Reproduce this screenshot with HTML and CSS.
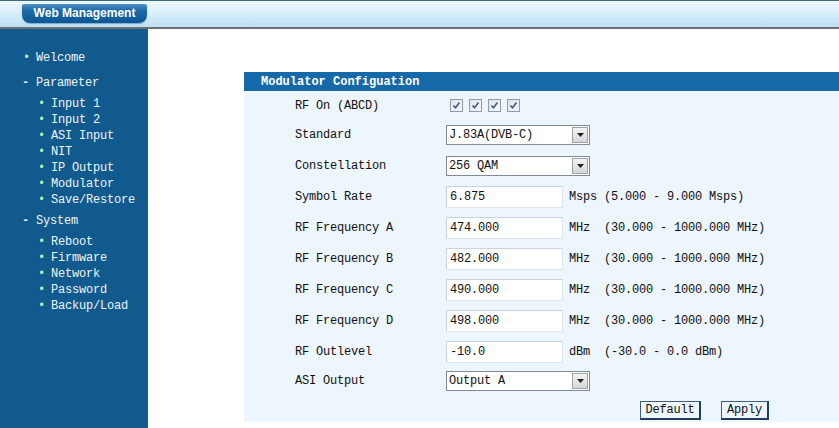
FILE: index.html
```html
<!DOCTYPE html>
<html lang="en">

<head>
  <meta charset="UTF-8" />
  <title>Web Management</title>
  <link rel="stylesheet" href="styles.css">
</head>

<body>

  <div class="header">
    <div class="tab">Web Management</div>
  </div>

  <div class="page">
    <div class="sidebar">
      <ul class="menu">
        <li class="item"><span class="dot">&bull;</span>Welcome</li>
        <li class="group"><span class="dash">-</span>Parameter
          <ul class="sub">
            <li><span class="dot">&bull;</span>Input 1</li>
            <li><span class="dot">&bull;</span>Input 2</li>
            <li><span class="dot">&bull;</span>ASI Input</li>
            <li><span class="dot">&bull;</span>NIT</li>
            <li><span class="dot">&bull;</span>IP Output</li>
            <li><span class="dot">&bull;</span>Modulator</li>
            <li><span class="dot">&bull;</span>Save/Restore</li>
          </ul>
        </li>
        <li class="group"><span class="dash">-</span>System
          <ul class="sub">
            <li><span class="dot">&bull;</span>Reboot</li>
            <li><span class="dot">&bull;</span>Firmware</li>
            <li><span class="dot">&bull;</span>Network</li>
            <li><span class="dot">&bull;</span>Password</li>
            <li><span class="dot">&bull;</span>Backup/Load</li>
          </ul>
        </li>
      </ul>
    </div>

    <div class="content">
      <div class="panel">
        <div class="panel-title">Modulator Configuation</div>

        <div class="row first">
          <div class="label">RF On (ABCD)</div>
          <div class="field checks">
            <span class="check"><svg width="9" height="9" viewBox="0 0 9 9"><path d="M1.5 4.5 L3.5 6.8 L7.5 1.5" fill="none" stroke="#3f5c8c" stroke-width="1.6"/></svg></span>
            <span class="check"><svg width="9" height="9" viewBox="0 0 9 9"><path d="M1.5 4.5 L3.5 6.8 L7.5 1.5" fill="none" stroke="#3f5c8c" stroke-width="1.6"/></svg></span>
            <span class="check"><svg width="9" height="9" viewBox="0 0 9 9"><path d="M1.5 4.5 L3.5 6.8 L7.5 1.5" fill="none" stroke="#3f5c8c" stroke-width="1.6"/></svg></span>
            <span class="check"><svg width="9" height="9" viewBox="0 0 9 9"><path d="M1.5 4.5 L3.5 6.8 L7.5 1.5" fill="none" stroke="#3f5c8c" stroke-width="1.6"/></svg></span>
          </div>
        </div>

        <div class="row">
          <div class="label">Standard</div>
          <div class="field">
            <div class="select"><span class="value">J.83A(DVB-C)</span><span class="arrow"><svg width="7" height="4" viewBox="0 0 7 4"><path d="M0 0 H7 L3.5 4 Z" fill="#222"/></svg></span></div>
          </div>
        </div>

        <div class="row">
          <div class="label">Constellation</div>
          <div class="field">
            <div class="select"><span class="value">256 QAM</span><span class="arrow"><svg width="7" height="4" viewBox="0 0 7 4"><path d="M0 0 H7 L3.5 4 Z" fill="#222"/></svg></span></div>
          </div>
        </div>

        <div class="row">
          <div class="label">Symbol Rate</div>
          <div class="field"><span class="input">6.875</span><span class="unit">Msps (5.000 - 9.000 Msps)</span></div>
        </div>

        <div class="row">
          <div class="label">RF Frequency A</div>
          <div class="field"><span class="input">474.000</span><span class="unit">MHz  (30.000 - 1000.000 MHz)</span></div>
        </div>

        <div class="row">
          <div class="label">RF Frequency B</div>
          <div class="field"><span class="input">482.000</span><span class="unit">MHz  (30.000 - 1000.000 MHz)</span></div>
        </div>

        <div class="row">
          <div class="label">RF Frequency C</div>
          <div class="field"><span class="input">490.000</span><span class="unit">MHz  (30.000 - 1000.000 MHz)</span></div>
        </div>

        <div class="row">
          <div class="label">RF Frequency D</div>
          <div class="field"><span class="input">498.000</span><span class="unit">MHz  (30.000 - 1000.000 MHz)</span></div>
        </div>

        <div class="row">
          <div class="label">RF Outlevel</div>
          <div class="field"><span class="input">-10.0</span><span class="unit">dBm  (-30.0 - 0.0 dBm)</span></div>
        </div>

        <div class="row last">
          <div class="label">ASI Output</div>
          <div class="field">
            <div class="select"><span class="value">Output A</span><span class="arrow"><svg width="7" height="4" viewBox="0 0 7 4"><path d="M0 0 H7 L3.5 4 Z" fill="#222"/></svg></span></div>
          </div>
        </div>

        <div class="buttons">
          <button class="btn default">Default</button>
          <button class="btn">Apply</button>
        </div>
      </div>
    </div>
  </div>

</body>

</html>
```

FILE: styles.css
```css
body {
  margin: 0;
  padding: 0;
  width: 839px;
  height: 428px;
  overflow: hidden;
  background-color: #fff;
  font-family: "Liberation Mono", "DejaVu Sans Mono", monospace;
  font-size: 12px;
  letter-spacing: -0.2px;
  color: #111;
}

/* top bar */
.header {
  height: 26px;
  border-top: 1px solid #3d6a85;
  border-bottom: 2px solid #6c7175;
  background: linear-gradient(to bottom, #eef8fd 0%, #d9eefa 45%, #bcdff2 100%);
  padding-left: 22px;
}

.tab {
  width: 125px;
  height: 19px;
  margin-top: 3px;
  background: linear-gradient(to bottom, #4f8fc4 0%, #1d69a8 35%, #0d5696 100%);
  border-radius: 2px 2px 8px 8px;
  color: #fff;
  font-family: "Liberation Sans", Arial, sans-serif;
  font-weight: bold;
  font-size: 12px;
  letter-spacing: 0;
  line-height: 19px;
  text-align: center;
  box-shadow: 0 1px 1px #7ba9c8;
}

.page {
  display: flex;
  height: 399px;
}

/* left menu */
.sidebar {
  width: 148px;
  flex-shrink: 0;
  background-color: #115a8d;
  color: #eef4f8;
}

.menu {
  list-style: none;
  margin: 0;
  padding: 21px 0 0 22px;
}

.menu li {
  white-space: nowrap;
}

.item {
  line-height: 16px;
  margin-bottom: 9px;
}

.group {
  line-height: 16px;
  margin-bottom: 5px;
}

.dot {
  display: inline-block;
  width: 14px;
  color: #b8f0b4;
  text-indent: 1px;
}

.dash {
  display: inline-block;
  width: 14px;
  color: #e8f0f4;
  font-weight: bold;
}

.sub {
  list-style: none;
  margin: 5px 0 0 0;
  padding: 0 0 0 15px;
}

.sub li {
  line-height: 16px;
}

/* main area */
.content {
  flex: 1;
  padding: 43px 0 0 96px;
}

.panel {
  background-color: #edf5fd;
  height: 350px;
}

.panel-title {
  height: 19px;
  line-height: 20px;
  background-color: #1569a8;
  color: #fff;
  font-weight: bold;
  padding-left: 17px;
  letter-spacing: 0;
  font-size: 12px;
}

.row {
  display: flex;
  align-items: center;
  height: 31px;
  padding-left: 51px;
}

.row.first {
  height: 27px;
  padding-top: 1px;
}

.row.last {
  height: 28px;
}

.label {
  width: 151px;
  white-space: pre;
}

.field {
  display: flex;
  align-items: center;
  white-space: pre;
}

.checks {
  gap: 6px;
  padding-left: 4px;
}

.check {
  display: flex;
  align-items: center;
  justify-content: center;
  width: 11px;
  height: 11px;
  border: 1px solid #8d9cae;
  background: linear-gradient(to bottom right, #dfe5ec, #f4f6f8);
}

.input {
  display: block;
  width: 112px;
  height: 20px;
  line-height: 21px;
  padding-left: 3px;
  border: 1px solid #dde6ef;
  border-top-color: #c9d3dd;
  border-left-color: #c9d3dd;
  background-color: #fff;
  margin-right: 6px;
}

.unit {
  color: #111;
}

.select {
  display: flex;
  align-items: center;
  width: 142px;
  height: 18px;
  border: 1px solid #7f8a96;
  background-color: #fff;
}

.select .value {
  flex: 1;
  padding-left: 2px;
  line-height: 18px;
}

.arrow {
  display: flex;
  align-items: center;
  justify-content: center;
  width: 14px;
  height: 14px;
  margin-right: 1px;
  border: 1px solid #9aa3ad;
  background: linear-gradient(to bottom, #f4f4f4, #d6d6d6);
}

.buttons {
  display: flex;
  gap: 20px;
  padding: 6px 0 0 396px;
}

.btn {
  height: 19px;
  padding: 0;
  border-style: solid;
  border-width: 1px 2px 2px 1px;
  border-color: #3c5f80 #1f3d5c #1f3d5c #3c5f80;
  background-color: #edf5fd;
  font-family: "Liberation Mono", "DejaVu Sans Mono", monospace;
  font-size: 12px;
  letter-spacing: -0.2px;
  color: #111;
  width: 48px;
}

.btn.default {
  width: 61px;
}
```
